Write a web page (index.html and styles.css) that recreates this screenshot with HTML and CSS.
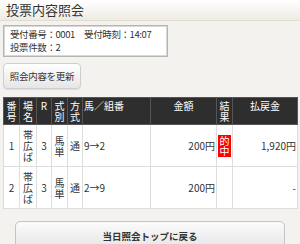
FILE: index.html
```html
<!DOCTYPE html>
<html lang="ja">
<head>
  <meta charset="UTF-8">
  <meta name="viewport" content="width=device-width, initial-scale=1.0">
  <title>投票内容照会</title>
  <link rel="stylesheet" href="styles.css">
</head>
<body>
  <div class="title-bar">投票内容照会</div>

  <div class="content">
    <div class="info-box">
      <div>受付番号：0001　受付時刻：14:07</div>
      <div>投票件数：2</div>
    </div>

    <button class="refresh-btn">照会内容を更新</button>

    <table class="bets">
      <colgroup>
        <col class="c-no">
        <col class="c-place">
        <col class="c-race">
        <col class="c-type">
        <col class="c-method">
        <col class="c-horse">
        <col class="c-amount">
        <col class="c-result">
        <col class="c-payout">
      </colgroup>
      <thead>
        <tr>
          <th>番号</th>
          <th>場名</th>
          <th>R</th>
          <th>式別</th>
          <th>方式</th>
          <th class="left">馬／組番</th>
          <th>金額</th>
          <th>結果</th>
          <th>払戻金</th>
        </tr>
      </thead>
      <tbody>
        <tr>
          <td>1</td>
          <td>帯広ば</td>
          <td>3</td>
          <td>馬単</td>
          <td>通</td>
          <td class="left">9→2</td>
          <td class="right">200円</td>
          <td><span class="hit">的中</span></td>
          <td class="right">1,920円</td>
        </tr>
        <tr>
          <td>2</td>
          <td>帯広ば</td>
          <td>3</td>
          <td>馬単</td>
          <td>通</td>
          <td class="left">2→9</td>
          <td class="right">200円</td>
          <td></td>
          <td class="right">-</td>
        </tr>
      </tbody>
    </table>

    <button class="back-btn">当日照会トップに戻る</button>
  </div>
</body>
</html>
```

FILE: styles.css
```css
body {
  margin: 0;
  background-color: #f3f2ee;
  font-family: "Noto Sans CJK JP", "Noto Sans", sans-serif;
  color: #333;
  font-size: 10px;
}

.title-bar {
  height: 20px;
  line-height: 20px;
  padding-left: 6px;
  font-size: 13px;
  background: linear-gradient(#ffffff, #eeebe4);
  border-bottom: 1px solid #e2dccf;
}

.content {
  padding: 4px 3px 0 3px;
}

.info-box {
  width: 151px;
  padding: 2px 6px;
  background: #fff;
  border: 1px solid #b5b5b5;
  box-shadow: inset 0 0 0 1px #d8d8d8;
  font-size: 9.5px;
  line-height: 13px;
  letter-spacing: -0.4px;
  white-space: nowrap;
}

.refresh-btn {
  display: block;
  margin-top: 6px;
  width: 78px;
  height: 26px;
  padding: 0;
  font-family: inherit;
  font-size: 9.5px;
  letter-spacing: -0.3px;
  color: #333;
  background: linear-gradient(#ffffff, #e6e6e6);
  border: 1px solid #cfcfcf;
  border-radius: 4px;
  box-shadow: 0 1px 1px rgba(0, 0, 0, 0.08);
}

.bets {
  margin-top: 8px;
  width: 294px;
  table-layout: fixed;
  border-collapse: collapse;
  background: #fff;
}

.c-no { width: 16px; }
.c-place { width: 17px; }
.c-race { width: 15px; }
.c-type { width: 16px; }
.c-method { width: 15px; }
.c-horse { width: 68px; }
.c-amount { width: 66px; }
.c-result { width: 16px; }
.c-payout { width: 65px; }

.bets th {
  background: #2e2e2e;
  color: #fff;
  font-weight: normal;
  border: 1px solid #555;
  padding: 2px 1px;
  line-height: 11px;
  vertical-align: top;
  text-align: center;
}

.bets td {
  border: 1px solid #ddd;
  padding: 4px 1px;
  line-height: 11px;
  text-align: center;
  vertical-align: middle;
}

.bets .left {
  text-align: left;
}

.bets .right {
  text-align: right;
}

.hit {
  display: inline-block;
  width: 13px;
  padding: 1px 0;
  background: #f00;
  color: #fff;
  line-height: 10px;
}

.back-btn {
  display: block;
  margin: 12px auto 0;
  width: 270px;
  height: 30px;
  padding: 0;
  font-family: inherit;
  font-size: 9.5px;
  font-weight: bold;
  color: #333;
  background: linear-gradient(#fbfbfb, #e4e4e4);
  border: 1px solid #c4c4c4;
  border-radius: 5px;
}
```
